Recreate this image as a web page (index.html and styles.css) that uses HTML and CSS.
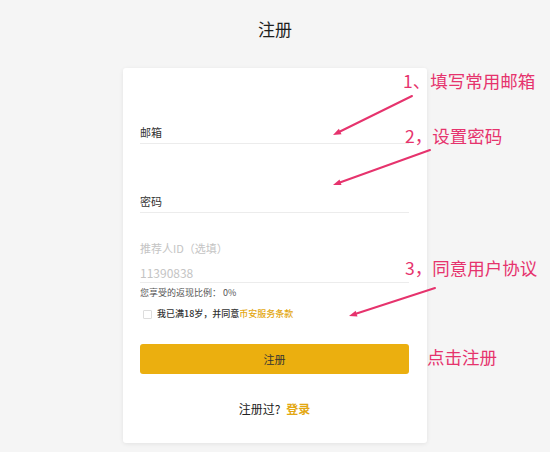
FILE: index.html
```html
<!DOCTYPE html>
<html lang="zh-CN">
<head>
  <meta charset="UTF-8">
  <meta name="viewport" content="width=device-width, initial-scale=1.0">
  <link rel="stylesheet" href="styles.css">
  <title>注册</title>
</head>
<body>
  <h1 class="page-title">注册</h1>

  <div class="form-card">
    <div class="field field-first">邮箱</div>
    <div class="field field-second">密码</div>

    <div class="ref-field">
      <div class="ref-label">推荐人ID（选填）</div>
      <div class="ref-value">11390838</div>
    </div>
    <div class="rebate">您享受的返现比例： 0%</div>

    <label class="agree">
      <span class="check-box"></span>
      <span>我已满18岁，并同意<a class="gold-link">币安服务条款</a></span>
    </label>

    <button class="submit-btn">注册</button>

    <div class="login-row">注册过? <a class="gold-link login-link">登录</a></div>
  </div>

  <!-- annotations drawn over the form -->
  <div class="notes">
    <svg class="note-arrows" width="550" height="452" viewBox="0 0 550 452">
      <line x1="412" y1="96" x2="340" y2="131.5" />
      <polygon points="333,135 341.5,134.2 338.9,128.8" />
      <line x1="430" y1="150" x2="340.5" y2="182.3" />
      <polygon points="333,185 341.5,185.1 339.5,179.5" />
      <line x1="435" y1="288" x2="356.6" y2="313.5" />
      <polygon points="349,316 357.5,316.4 355.7,310.7" />
    </svg>
    <div class="note note-1">1、填写常用邮箱</div>
    <div class="note note-2">2，设置密码</div>
    <div class="note note-3">3，同意用户协议</div>
    <div class="note note-4">点击注册</div>
  </div>
</body>
</html>
```

FILE: styles.css
```css
* {
  box-sizing: border-box;
}

body {
  margin: 0;
  padding: 0;
  min-height: 452px;
  background-color: #f5f5f5;
  font-family: "Noto Sans CJK SC", "Noto Sans", sans-serif;
  color: #333;
  position: relative;
}

.page-title {
  margin: 0;
  padding-top: 20px;
  font-size: 17px;
  line-height: 18px;
  font-weight: 400;
  text-align: center;
  color: #1e1e1e;
}

.form-card {
  width: 304px;
  margin: 30px auto 0;
  padding: 56px 18px 26px 17px;
  background-color: #fff;
  border-radius: 3px;
  box-shadow: 0px 1px 4px rgba(0, 0, 0, 0.08);
}

.field {
  font-size: 11px;
  line-height: 16px;
  padding-bottom: 3px;
  border-bottom: 1px solid #ececec;
  color: #333;
}

.field-second {
  margin-top: 49px;
}

.ref-field {
  margin-top: 27px;
  border-bottom: 1px solid #ececec;
  padding-bottom: 1px;
  color: #c4c4c4;
}

.ref-label {
  font-size: 11px;
  line-height: 16px;
}

.ref-value {
  margin-top: 9px;
  font-size: 12px;
  line-height: 16px;
}

.rebate {
  margin-top: 4px;
  font-size: 9px;
  line-height: 12px;
  color: #555;
}

.agree {
  display: flex;
  align-items: center;
  margin-top: 9px;
  font-size: 9px;
  line-height: 12px;
  color: #333;
  font-weight: 500;
}

.check-box {
  width: 9px;
  height: 9px;
  margin: 0 5px 0 3px;
  border: 1px solid #ddd;
  border-radius: 1px;
  background-color: #fff;
}

.gold-link {
  color: #e3a813;
  text-decoration: none;
  font-weight: 500;
}

.submit-btn {
  display: block;
  width: 100%;
  height: 30px;
  margin-top: 24px;
  border: none;
  border-radius: 3px;
  background-color: #ebaf0f;
  color: #333;
  font-family: inherit;
  font-size: 11px;
  cursor: pointer;
}

.login-row {
  margin-top: 27px;
  font-size: 12px;
  line-height: 16px;
  text-align: center;
  color: #222;
}

.login-link {
  margin-left: 3px;
  font-weight: 700;
}

.notes {
  position: absolute;
  left: 0;
  top: 0;
  width: 550px;
  height: 452px;
  pointer-events: none;
}

.note-arrows {
  position: absolute;
  left: 0;
  top: 0;
}

.note-arrows line {
  stroke: #e6336d;
  stroke-width: 2;
  stroke-linecap: round;
}

.note-arrows polygon {
  fill: #e6336d;
}

.note {
  position: absolute;
  font-size: 17.5px;
  line-height: 20px;
  color: #e6336d;
  white-space: nowrap;
}

.note-1 { left: 403px; top: 71px; }
.note-2 { left: 405px; top: 126px; }
.note-3 { left: 405px; top: 258px; }
.note-4 { left: 427px; top: 347px; }
```
